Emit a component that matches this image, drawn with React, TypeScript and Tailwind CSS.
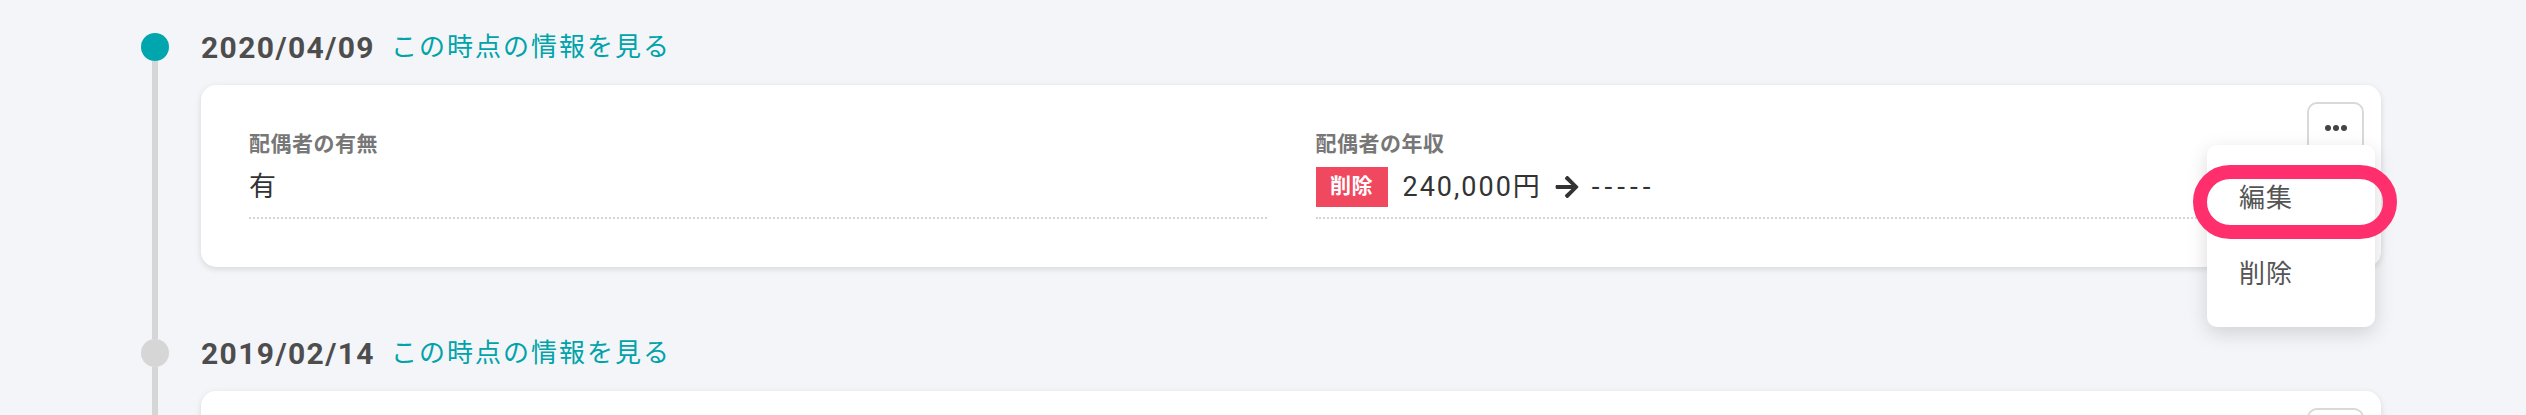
import { FaArrowRight } from "react-icons/fa";

const FONT = { fontFamily: 'Roboto, "Noto Sans CJK JP", sans-serif' };

function MoreButton() {
  return (
    <button className="absolute right-[17px] top-[17px] flex h-[52px] w-[57px] items-center justify-center gap-[2px] rounded-[10px] border-2 border-[#d9d9d9] bg-white">
      <span className="h-[6px] w-[6px] rounded-full bg-[#444]" />
      <span className="h-[6px] w-[6px] rounded-full bg-[#444]" />
      <span className="h-[6px] w-[6px] rounded-full bg-[#444]" />
    </button>
  );
}

function Field({ label, children }: { label: string; children: React.ReactNode }) {
  return (
    <div className="border-b-2 border-dotted border-[#d4d4d4] pb-[10px]">
      <p className="text-[21px] font-bold leading-[30px] tracking-[0.5px] text-[#777]">{label}</p>
      <div className="mt-[8px] flex h-[40px] items-center text-[27px] tracking-[1px] text-[#333]">{children}</div>
    </div>
  );
}

function TimelineItem({ date, active, children }: { date: string; active?: boolean; children: React.ReactNode }) {
  return (
    <div className="flex gap-[32px]">
      <div className="flex w-[28px] shrink-0 flex-col items-center">
        <div className={`h-[28px] w-[28px] rounded-full ${active ? "bg-[#00a6ad]" : "bg-[#d6d6d6]"}`} />
        <div className="w-[6px] flex-1 bg-[#d6d6d6]" />
      </div>
      <div className="flex-1 pb-[72px]">
        <div className="flex h-[28px] items-center gap-[16px]">
          <span className="text-[30px] font-bold tracking-[1.4px] text-[#4d4d4d]">{date}</span>
          <a className="cursor-pointer text-[26px] tracking-[2px] text-[#00a3aa]">この時点の情報を見る</a>
        </div>
        {children}
      </div>
    </div>
  );
}

export default function App() {
  return (
    <div className="h-[415px] w-full overflow-hidden bg-[#f4f5f9] pl-[141px] pr-[145px] pt-[33px]" style={FONT}>
      <TimelineItem date="2020/04/09" active>
        <div className="relative mt-[24px] rounded-[15px] bg-white shadow-[0_2px_6px_rgba(0,0,0,0.12)]">
          <div className="grid grid-cols-2 gap-x-[49px] px-[48px] pb-[48px] pt-[44px]">
            <Field label="配偶者の有無">有</Field>
            <Field label="配偶者の年収">
              <span className="mr-[15px] flex h-[40px] w-[72px] items-center justify-center bg-[#f0495f] text-[21px] font-bold tracking-[0.5px] text-white">
                削除
              </span>
              <span className="tracking-[2px]">240,000円</span>
              <FaArrowRight className="mx-[12px] text-[#333]" size={26} />
              <span className="text-[28px] tracking-[5px]">-----</span>
            </Field>
          </div>
          <MoreButton />
          <div className="absolute right-[6px] top-[60px] z-10 w-[168px] rounded-[10px] bg-white py-[15px] shadow-[0_6px_20px_rgba(0,0,0,0.15)]">
            <div className="flex h-[76px] items-center pl-[32px] text-[26px] tracking-[1px] text-[#555]">編集</div>
            <div className="flex h-[76px] items-center pl-[32px] text-[26px] tracking-[1px] text-[#555]">削除</div>
            <div className="absolute left-[-14px] top-[20px] h-[74px] w-[204px] rounded-full border-[14px] border-[#ff2f6d]" />
          </div>
        </div>
      </TimelineItem>
      <TimelineItem date="2019/02/14">
        <div className="relative mt-[24px] h-[182px] rounded-[15px] bg-white shadow-[0_2px_6px_rgba(0,0,0,0.12)]">
          <MoreButton />
        </div>
      </TimelineItem>
    </div>
  );
}
